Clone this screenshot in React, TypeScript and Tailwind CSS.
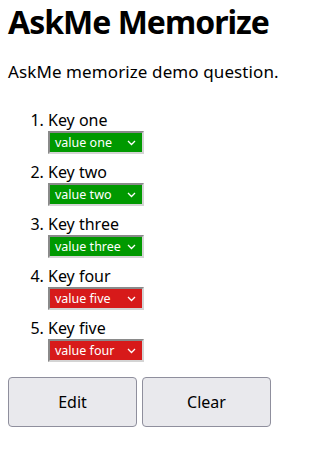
import React from "react";

const items = [
  { key: "Key one", value: "value one", ok: true },
  { key: "Key two", value: "value two", ok: true },
  { key: "Key three", value: "value three", ok: true },
  { key: "Key four", value: "value five", ok: false },
  { key: "Key five", value: "value four", ok: false },
];

function Chevron() {
  return (
    <svg width="9" height="6" viewBox="0 0 9 6" fill="none" stroke="white" strokeWidth="1.3">
      <path d="M1 1 L4.5 4.5 L8 1" />
    </svg>
  );
}

export default function App() {
  return (
    <div className="px-2 text-black bg-white" style={{ fontFamily: '"Noto Sans", sans-serif' }}>
      <h1 className="text-[32px] font-bold leading-[44px] tracking-[-1px] m-0">AskMe Memorize</h1>
      <p className="mt-4 text-[17px] leading-[24px] tracking-[0.1px]">AskMe memorize demo question.</p>
      <ol className="list-decimal pl-10 mt-[27px] text-[16px]">
        {items.map((it) => (
          <li key={it.key} className="mb-[9px] leading-[19px]">
            <div className="leading-[19px]">{it.key}</div>
            <div
              className={`mt-px flex h-[23px] w-[96px] items-center justify-between border-2 border-t-[#8a8a8a] border-l-[#8a8a8a] border-r-[#d4d4d4] border-b-[#d4d4d4] pl-[5px] pr-[6px] text-[12.5px] text-white ${
                it.ok ? "bg-[#009900]" : "bg-[#d71a1a]"
              }`}
            >
              <span>{it.value}</span>
              <Chevron />
            </div>
          </li>
        ))}
      </ol>
      <div className="mt-[15px] flex gap-[5px]">
        <button className="h-[50px] w-[129px] rounded-[4px] border border-[#8f8f9d] bg-[#e9e9ed] text-[16px]">Edit</button>
        <button className="h-[50px] w-[129px] rounded-[4px] border border-[#8f8f9d] bg-[#e9e9ed] text-[16px]">Clear</button>
      </div>
    </div>
  );
}
